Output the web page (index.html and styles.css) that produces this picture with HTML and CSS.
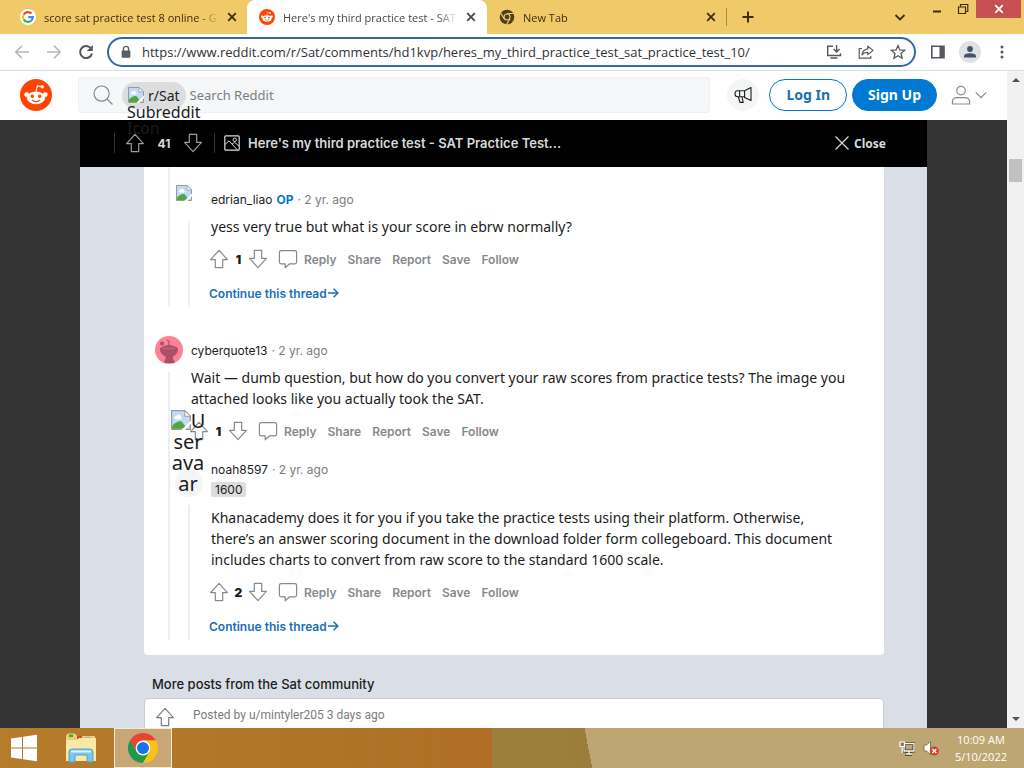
FILE: index.html
```html
<!DOCTYPE html>
<html lang="en">
<head>
<meta charset="utf-8">
<title>Here's my third practice test - SAT Practice Test 10</title>
<link rel="stylesheet" href="styles.css">
</head>
<body>
<svg class="defs" aria-hidden="true">
  <symbol id="up" viewBox="0 0 20 20"><path d="M10 1.3 18.4 10.6H13.7V18.6H6.3V10.6H1.6Z" fill="none" stroke="currentColor" stroke-width="1.2" stroke-linejoin="round"/></symbol>
  <symbol id="down" viewBox="0 0 20 20"><path d="M10 18.7 18.4 9.4H13.7V1.4H6.3V9.4H1.6Z" fill="none" stroke="currentColor" stroke-width="1.2" stroke-linejoin="round"/></symbol>
  <symbol id="bubble" viewBox="0 0 20 20"><path d="M3.2 1.6H16.8Q18.6 1.6 18.6 3.4V13Q18.6 14.8 16.8 14.8H11.6L7.2 18.8V14.8H3.2Q1.4 14.8 1.4 13V3.4Q1.4 1.6 3.2 1.6Z" fill="none" stroke="currentColor" stroke-width="1.2" stroke-linejoin="round"/></symbol>
  <symbol id="arrow" viewBox="0 0 12 12"><path d="M1 6H10.6M6.6 1.8 10.8 6 6.6 10.2" fill="none" stroke="currentColor" stroke-width="1.5"/></symbol>
  <symbol id="cross" viewBox="0 0 10 10"><path d="M1.2 1.2 8.8 8.8M8.8 1.2 1.2 8.8" fill="none" stroke="currentColor" stroke-width="1.8"/></symbol>
  <symbol id="broken" viewBox="0 0 16 16"><path d="M.5.5H11L15.5 5V15.5H.5Z" fill="#c3d9f5" stroke="#9a9a9a"/><path d="M11 .5V5H15.5Z" fill="#fff" stroke="#9a9a9a" stroke-width=".8"/><path d="M3 7.4A1.8 1.8 0 0 1 4.6 4.6 2 2 0 0 1 8.2 5.4 1.4 1.4 0 0 1 8 7.4Z" fill="#fff"/><path d="M1 15V12.6Q5 8 8.6 9.2L13 15Z" fill="#4ea83f"/><path d="M8.2 15.9 16 8.4V11L11.4 15.9Z" fill="#fff"/></symbol>
  <symbol id="snoo" viewBox="0 0 32 32"><circle cx="16" cy="16" r="16" fill="#ff4500"/><circle cx="6.7" cy="15.6" r="2.4" fill="#fff"/><circle cx="25.3" cy="15.6" r="2.4" fill="#fff"/><ellipse cx="16" cy="18.8" rx="9.2" ry="6.4" fill="#fff"/><path d="M16 12.5 17.4 6.8 21.6 7.7" fill="none" stroke="#fff" stroke-width="1.1"/><circle cx="22.2" cy="7.8" r="1.7" fill="#fff"/><circle cx="12.3" cy="17.2" r="1.7" fill="#ff4500"/><circle cx="19.7" cy="17.2" r="1.7" fill="#ff4500"/><path d="M12.3 21.2Q16 24 19.7 21.2" fill="none" stroke="#ff4500" stroke-width="1.1" stroke-linecap="round"/></symbol>
</svg>

<div class="desktop">
  <div class="tabs">
    <button class="tab tab-first">
      <svg class="i16" viewBox="0 0 16 16"><circle cx="8" cy="8" r="8" fill="#fff"/><g fill="none" stroke-width="2.1"><path d="M11.5 4.6A4.9 4.9 0 0 0 3.7 5.6" stroke="#ea4335"/><path d="M3.7 5.6A4.9 4.9 0 0 0 3.7 10.4" stroke="#fbbc05"/><path d="M3.7 10.4A4.9 4.9 0 0 0 11.2 11.7" stroke="#34a853"/><path d="M11.2 11.7A4.9 4.9 0 0 0 12.9 8.1H8.2" stroke="#4285f4"/></g></svg>
      <span class="tab-title">score sat practice test 8 online - G</span>
      <svg class="i10"><use href="#cross"/></svg>
    </button>
    <button class="tab tab-active">
      <svg class="i16"><use href="#snoo"/></svg>
      <span class="tab-title">Here's my third practice test - SAT</span>
      <svg class="i10"><use href="#cross"/></svg>
    </button>
    <button class="tab tab-last">
      <svg class="i16" viewBox="0 0 16 16"><circle cx="8" cy="8" r="7.3" fill="#4d3f22"/><circle cx="8" cy="8" r="3.6" fill="#f0c969"/><circle cx="8" cy="8" r="2.4" fill="#4d3f22"/><path d="M8 4.5H14.8M5 9.7 1.6 3.9M11 9.7 7.6 15.4" stroke="#f0c969" stroke-width="1.1"/></svg>
      <span class="tab-title">New Tab</span>
      <svg class="i10"><use href="#cross"/></svg>
    </button>
    <button class="new-tab" aria-label="New tab"><svg class="i12" viewBox="0 0 12 12"><path d="M6 .5V11.5M.5 6H11.5" stroke="#3f2d10" stroke-width="2"/></svg></button>
    <div class="controls">
      <button class="ctl ctl-search" aria-label="Search tabs"><svg class="i12" viewBox="0 0 12 12"><path d="M1.5 4 6 8.5 10.5 4" fill="none" stroke="#3f2d10" stroke-width="1.8"/></svg></button>
      <button class="ctl" aria-label="Minimize"><svg class="i12" viewBox="0 0 12 12"><path d="M2 8.5H10" stroke="#3f2d10" stroke-width="2"/></svg></button>
      <button class="ctl" aria-label="Restore"><svg class="i12" viewBox="0 0 12 12"><path d="M1.5 4H8.5V10.5H1.5ZM3.5 4V1.5H10.8V8.5H8.5" fill="none" stroke="#3f2d10" stroke-width="1.2"/></svg></button>
      <button class="ctl ctl-close" aria-label="Close window"><svg class="i10"><use href="#cross"/></svg></button>
    </div>
  </div>

  <div class="toolbar">
    <button class="nav off" aria-label="Back"><svg class="i16" viewBox="0 0 16 16"><path d="M15 8H2M8 1.8 1.8 8 8 14.2" fill="none" stroke="currentColor" stroke-width="1.6"/></svg></button>
    <button class="nav off" aria-label="Forward"><svg class="i16" viewBox="0 0 16 16"><path d="M1 8H14M8 1.8 14.2 8 8 14.2" fill="none" stroke="currentColor" stroke-width="1.6"/></svg></button>
    <button class="nav" aria-label="Reload"><svg class="i16" viewBox="0 0 16 16"><path d="M13.2 4.8A6 6 0 1 0 14 9.4" fill="none" stroke="currentColor" stroke-width="2"/><path d="M14.8 1V7H8.8Z" fill="currentColor"/></svg></button>
    <div class="omnibox">
      <svg class="i14" viewBox="0 0 14 14"><rect x="2.6" y="5.4" width="8.8" height="7.4" rx="1" fill="#5a5d61"/><path d="M4.4 6V4A2.6 2.6 0 0 1 9.6 4V6" fill="none" stroke="#5a5d61" stroke-width="1.4"/></svg>
      <input class="url" type="text" aria-label="Address" value="https://www.reddit.com/r/Sat/comments/hd1kvp/heres_my_third_practice_test_sat_practice_test_10/">
      <button class="nav" aria-label="Install"><svg class="i16" viewBox="0 0 16 16"><path d="M7 2.2H1.7V11.5H14.5V9.2M4.5 14H11.5M10.6 1V7.6M7.6 5 10.6 8 13.6 5" fill="none" stroke="currentColor" stroke-width="1.4"/></svg></button>
      <button class="nav" aria-label="Share"><svg class="i16" viewBox="0 0 16 16"><path d="M4 4.5H1.2V14.2H12.8V12M9.8 2.2 15 6.4 9.8 10.6V8.4Q6 8.2 4 10.8 4.8 5.4 9.8 4.8Z" fill="none" stroke="currentColor" stroke-width="1.2" stroke-linejoin="round"/></svg></button>
      <button class="nav" aria-label="Bookmark"><svg class="i16" viewBox="0 0 16 16"><path d="M8 1.6 9.9 6 14.6 6.4 11 9.5 12.1 14.2 8 11.7 3.9 14.2 5 9.5 1.4 6.4 6.1 6Z" fill="none" stroke="currentColor" stroke-width="1.3"/></svg></button>
    </div>
    <button class="nav" aria-label="Side panel"><svg class="i16" viewBox="0 0 16 16"><path d="M1.8 2.2H14V13.8H1.8Z" fill="none" stroke="currentColor" stroke-width="1.6"/><path d="M9.5 2H14V14H9.5Z" fill="currentColor"/></svg></button>
    <button class="nav profile" aria-label="Profile"><svg class="i22" viewBox="0 0 22 22"><circle cx="11" cy="11" r="11" fill="#dfe1e5"/><circle cx="11" cy="8" r="2.9" fill="#46526b"/><path d="M5 16.4V15Q5.4 12.2 11 12.2T17 15V16.4Z" fill="#46526b"/></svg></button>
    <button class="nav" aria-label="Menu"><svg class="i16" viewBox="0 0 16 16" fill="currentColor"><circle cx="8" cy="3" r="1.5"/><circle cx="8" cy="8" r="1.5"/><circle cx="8" cy="13" r="1.5"/></svg></button>
  </div>

  <div class="viewport">
    <div class="page">
      <header class="site">
        <a class="logo" href="#" aria-label="Reddit"><svg class="i32"><use href="#snoo"/></svg></a>
        <div class="search">
          <svg class="i22" viewBox="0 0 22 22"><circle cx="9.6" cy="9.6" r="7.6" fill="none" stroke="#878a8c" stroke-width="1.2"/><path d="M15 15 20.5 20.5" stroke="#878a8c" stroke-width="1.2"/></svg>
          <span class="chip"><svg class="i16"><use href="#broken"/></svg>r/Sat<span class="chip-alt">Subreddit<br><span class="chip-dim">Icon</span></span></span>
          <input class="query" type="search" placeholder="Search Reddit" aria-label="Search Reddit">
        </div>
        <button class="horn" aria-label="Advertise"><svg class="i20" viewBox="0 0 20 20"><path d="M18 2.6V15.6L11.6 12.4V5.800ZM11.6 5.8H4.6Q2 5.8 2 8.800T4.600 11.800H11.600M6.600 5.800V11.800M5.400 12 7 17.400H10.200L9 12" fill="none" stroke="#1c1c1c" stroke-width="1.1" stroke-linejoin="round"/></svg></button>
        <div class="auth">
          <button class="pill">Log In</button>
          <button class="pill pill-fill">Sign Up</button>
        </div>
        <button class="user" aria-label="User menu">
          <svg class="i20" viewBox="0 0 20 20"><circle cx="10" cy="5.6" r="4.3" fill="none" stroke="#878a8c" stroke-width="1.2"/><path d="M1.4 19V16.6Q1.8 12.6 6 12.6H14Q18.2 12.6 18.6 16.6V19Z" fill="none" stroke="#878a8c" stroke-width="1.2"/></svg>
          <svg class="i12" viewBox="0 0 12 12"><path d="M.8 3.4 6 8.6 11.2 3.4" fill="none" stroke="#878a8c" stroke-width="1.2"/></svg>
        </button>
      </header>

      <div class="backdrop">
        <main class="overlay">
          <div class="postbar">
            <div class="postvote">
              <svg class="i20"><use href="#up"/></svg><b>41</b><svg class="i20"><use href="#down"/></svg>
            </div>
            <svg class="i16" viewBox="0 0 16 16"><rect x=".8" y=".8" width="14.4" height="14.4" rx="1" fill="none" stroke="#d7dadc" stroke-width="1.2"/><circle cx="10.8" cy="4.8" r="1.7" fill="none" stroke="#d7dadc"/><path d="M1 9.5 5 5.8 13.4 15M8 9.2 10.6 7.4 15 11" fill="none" stroke="#d7dadc"/></svg>
            <h1>Here's my third practice test - SAT Practice Test...</h1>
            <button class="close"><svg class="i16" viewBox="0 0 16 16"><path d="M1.5 1.5 14.5 14.5M14.5 1.5 1.5 14.5" stroke="currentColor" stroke-width="1.2"/></svg>Close</button>
          </div>
          <div class="content">
            <section class="card">
              <article class="comment">
                <div class="rail"><span class="line"></span></div>
                <div class="body">
                  <article class="comment reply reply-top">
                    <div class="rail"><svg class="i16 avatar-missing"><use href="#broken"/></svg><span class="line"></span></div>
                    <div class="body">
                      <div class="meta"><a class="name" href="#">edrian_liao</a><b class="op">OP</b><span>· 2 yr. ago</span></div>
                      <p>yess very true but what is your score in ebrw normally?</p>
                      <div class="actions"><button class="vote" aria-label="Upvote"><svg class="i20"><use href="#up"/></svg></button><b>1</b><button class="vote" aria-label="Downvote"><svg class="i20"><use href="#down"/></svg></button><button class="act with-icon"><svg class="i20"><use href="#bubble"/></svg>Reply</button><button class="act">Share</button><button class="act">Report</button><button class="act">Save</button><button class="act">Follow</button></div>
                      <a class="more" href="#">Continue this thread<svg class="i12"><use href="#arrow"/></svg></a>
                    </div>
                  </article>
                </div>
              </article>

              <article class="comment second">
                <div class="rail"><svg class="avatar" viewBox="0 0 28 28"><circle cx="14" cy="14" r="14" fill="#fb8299"/><circle cx="7" cy="7.5" r="2" fill="#a94f68"/><path d="M12 4Q14.5 5 14 9" fill="none" stroke="#a94f68" stroke-width="1.2"/><path d="M5 12Q14 6 23 12 23.5 18 18 20.5V23Q20 25 19.5 27H9.5Q9 24 10.5 23V20.5Q4.5 18 5 12Z" fill="#a94f68"/><path d="M8 12.5H20" stroke="#bd5f79" stroke-width="2"/></svg><span class="line"></span></div>
                <div class="body">
                  <div class="meta"><a class="name" href="#">cyberquote13</a><span>· 2 yr. ago</span></div>
                  <p>Wait — dumb question, but how do you convert your raw scores from practice tests? The image you attached looks like you actually took the SAT.</p>
                  <div class="actions"><button class="vote" aria-label="Upvote"><svg class="i20"><use href="#up"/></svg></button><b>1</b><button class="vote" aria-label="Downvote"><svg class="i20"><use href="#down"/></svg></button><button class="act with-icon"><svg class="i20"><use href="#bubble"/></svg>Reply</button><button class="act">Share</button><button class="act">Report</button><button class="act">Save</button><button class="act">Follow</button></div>
                  <article class="comment reply">
                    <div class="rail"><span class="avatar avatar-blank"><span class="avatar-alt"><svg class="i20"><use href="#broken"/></svg>U<br>ser<br>ava<br>ar</span></span><span class="line"></span></div>
                    <div class="body">
                      <div class="meta meta-flair"><a class="name" href="#">noah8597</a><span>· 2 yr. ago</span></div>
                      <span class="flair">1600</span>
                      <p>Khanacademy does it for you if you take the practice tests using their platform. Otherwise, there’s an answer scoring document in the download folder form collegeboard. This document includes charts to convert from raw score to the standard 1600 scale.</p>
                      <div class="actions"><button class="vote" aria-label="Upvote"><svg class="i20"><use href="#up"/></svg></button><b>2</b><button class="vote" aria-label="Downvote"><svg class="i20"><use href="#down"/></svg></button><button class="act with-icon"><svg class="i20"><use href="#bubble"/></svg>Reply</button><button class="act">Share</button><button class="act">Report</button><button class="act">Save</button><button class="act">Follow</button></div>
                      <a class="more" href="#">Continue this thread<svg class="i12"><use href="#arrow"/></svg></a>
                    </div>
                  </article>
                </div>
              </article>
            </section>
            <h2>More posts from the Sat community</h2>
            <section class="post"><svg class="i20"><use href="#up"/></svg><span>Posted by u/mintyler205 3 days ago</span></section>
          </div>
        </main>
      </div>
    </div>
    <div class="scrollbar">
      <svg class="i8" viewBox="0 0 8 8"><path d="M0 6 4 2 8 6Z" fill="#505050"/></svg>
      <span class="thumb"></span>
      <svg class="i8" viewBox="0 0 8 8"><path d="M0 2 4 6 8 2Z" fill="#505050"/></svg>
    </div>
  </div>

  <footer class="taskbar">
    <button class="task" aria-label="Start"><svg class="i28" viewBox="0 0 28 28" fill="#fff"><path d="M1 4.5 12 3V13.4H1ZM13 2.8 27 .8V13.4H13ZM1 14.6H12V25L1 23.5ZM13 14.6H27V27.2L13 25.2Z"/></svg></button>
    <button class="task" aria-label="File Explorer"><svg class="i32" viewBox="0 0 32 32"><path d="M1 3.5 3 1.5H10L12 4H30V29H1Z" fill="#e9cf74"/><path d="M4 2.5H8V5H4Z" fill="#36a852"/><path d="M12 4H17V7H12Z" fill="#d8482e"/><path d="M20 5.5H25V8H20Z" fill="#5b9bd0"/><path d="M1 8H12L14 6H31V29H1Z" fill="#f8eaa4"/><path d="M4 30V20Q4 17 7 17H25Q28 17 28 20V30H22V23H10V30Z" fill="#7cc5ec" stroke="#4da3d6"/><path d="M6 19.5H26" stroke="#d8f2ff" stroke-width="2"/></svg></button>
    <button class="task task-active" aria-label="Chrome"><svg class="i32" viewBox="0 0 32 32"><path d="M16 8.5H29A15 15 0 0 0 3 8.5L9.5 19.8Z" fill="#ea4335"/><path d="M9.5 19.8 3 8.5A15 15 0 0 0 16 31L22.5 19.8Z" fill="#1e9a4a"/><path d="M16 31A15 15 0 0 0 29 8.5H16L22.5 19.8Z" fill="#fbc116"/><circle cx="16" cy="16" r="7.4" fill="#fff"/><circle cx="16" cy="16" r="6" fill="#1a73e8"/></svg></button>
    <div class="tray">
      <svg class="i16" viewBox="0 0 16 16"><path d="M5 3.5H15V11H5ZM10 11V14M6 14.2H13" fill="none" stroke="#3f3520" stroke-width="3"/><path d="M5 3.5H15V11H5ZM10 11V14M6.5 14H13" fill="none" stroke="#fff" stroke-width="1.3"/><path d="M1 2H5.5V6.5H1ZM3.2 6.5V13" fill="#8c7a4c" stroke="#fff" stroke-width="1.2"/></svg>
      <svg class="i16" viewBox="0 0 16 16"><path d="M1 5H3.5L7.5 1.5V14.5L3.5 11H1Z" fill="#fff" stroke="#6f603a" stroke-width=".8"/><circle cx="11.3" cy="11" r="4.5" fill="#d33c2e"/><path d="M9.3 9 13.3 13M13.3 9 9.3 13" stroke="#fff" stroke-width="1.5"/></svg>
      <div class="clock"><time>10:09 AM</time><time>5/10/2022</time></div>
    </div>
  </footer>
</div>
</body>
</html>
```
FILE: styles.css
```css
* { box-sizing: border-box; }
body { margin: 0; font-family: "Noto Sans", sans-serif; color: #1c1c1c; }
button { border: 0; padding: 0; background: none; font: inherit; color: inherit; cursor: pointer; }
input { border: 0; padding: 0; background: none; outline: 0; min-width: 0; }
a { color: inherit; text-decoration: none; }
h1, h2, p { margin: 0; }
svg { display: block; flex: none; }
.defs { display: none; }
.i8 { width: 8px; height: 8px; }
.i10 { width: 10px; height: 10px; }
.i12 { width: 12px; height: 12px; }
.i14 { width: 14px; height: 14px; }
.i16 { width: 16px; height: 16px; }
.i20 { width: 20px; height: 20px; }
.i22 { width: 22px; height: 22px; }
.i28 { width: 28px; height: 28px; }
.i32 { width: 32px; height: 32px; }

.desktop { display: flex; flex-direction: column; height: 100vh; overflow: hidden; }

/* Browser chrome */
.tabs { display: flex; flex: none; height: 34px; background: #f0c969; color: #3f2d10; font-family: "Open Sans", sans-serif; font-size: 11px; }
.tab { display: flex; align-items: center; gap: 8px; flex: 0 1 240px; min-width: 0; padding: 0 12px; text-align: left; }
.tab-first { flex-basis: 247px; padding-left: 20px; padding-right: 10px; }
.tab-title { flex: 1; min-width: 0; overflow: hidden; white-space: nowrap; mask-image: linear-gradient(90deg, #000 88%, transparent); }
.tab-active { background: #fff; border-radius: 8px 8px 0 0; color: #45484c; padding-right: 11px; }
.tab-last { border-right: 1px solid #a88a45; height: 18px; align-self: center; padding-right: 10px; }
.new-tab { display: flex; align-items: center; padding: 0 15px; }
.controls { display: flex; align-items: flex-start; margin-left: auto; padding-right: 3px; }
.ctl { display: flex; align-items: center; justify-content: center; width: 26px; height: 18px; }
.ctl-search { width: 24px; height: 34px; margin-right: 12px; }
.ctl-close { width: 45px; background: #c75050; color: #fff; }
.toolbar { display: flex; align-items: center; flex: none; gap: 16px; height: 37px; padding: 0 14px; background: #fff; border-bottom: 1px solid #dadce0; color: #54575b; }
.profile, .profile + .nav { margin-left: -3px; }
.off { color: #b4b6b9; }
.omnibox { display: flex; align-items: center; flex: 1; min-width: 0; gap: 16px; height: 30px; margin: 0 -2px 0 -3px; padding: 0 8px 0 10px; border: 2px solid #3767a6; border-radius: 15px; }
.url { flex: 1; margin-left: -7px; font: 13px "Open Sans", sans-serif; color: #303236; }

.viewport { display: flex; flex: 1; min-height: 0; }
.page { display: flex; flex-direction: column; flex: 1; min-width: 0; }
.scrollbar { display: flex; flex-direction: column; align-items: center; flex: none; width: 17px; padding: 5px 0; background: #f1f1f1; }
.thumb { width: 13px; height: 23px; margin-top: 75px; margin-bottom: auto; background: #c1c1c1; }

/* Site header */
.site { display: flex; align-items: center; flex: none; height: 49px; padding: 0 20px 1px; background: #fff; }
.search { display: flex; align-items: center; flex: 1; min-width: 0; height: 36px; margin: 0 17px 0 26px; padding-left: 13px; background: #f6f7f8; border: 1px solid #edeff1; border-radius: 4px; }
.chip { position: relative; display: flex; align-items: center; gap: 4px; height: 27px; margin: 0 4px 0 8px; padding: 0 6px; background: #dcdddf; border-radius: 14px; font-size: 14px; }
.chip-alt { position: absolute; z-index: 2; left: 5px; top: 22px; font-size: 16px; line-height: 16px; }
.chip-dim { color: #1c1c1c; }
.query { flex: 1; font: 13px "Noto Sans", sans-serif; }
.query::placeholder { color: #7c7f81; }
.horn { display: flex; align-items: center; justify-content: center; width: 32px; height: 32px; border-radius: 50%; background: #f4f5f5; }
.auth { display: flex; gap: 5px; margin: 0 14px 0 10px; }
.pill { height: 32px; padding: 0 16px 2px; border: 1px solid #0079d3; border-radius: 16px; font-size: 14px; font-weight: 700; color: #1a6fb4; }
.pill-fill { padding: 0 15px 2px; background: #0079d3; color: #fff; }
.user { display: flex; align-items: center; gap: 4px; }

/* Post overlay */
.backdrop { display: flex; flex: 1; min-height: 0; padding: 0 80px; background: #333; }
.overlay { display: flex; flex-direction: column; flex: 1; min-width: 0; background: #dadee6; }
.postbar { display: flex; align-items: center; flex: none; gap: 8px; height: 47px; padding: 0 41px 1px 34px; background: #000; color: #d7dadc; font-size: 12px; }
.postvote { display: flex; align-items: center; gap: 10px; margin-right: 1px; padding: 0 11px 0 10px; border: solid #343536; border-width: 0 1px; color: #9a9c9e; }
.postvote b { width: 18px; text-align: center; font-family: Inter, sans-serif; color: #d7dadc; }
h1 { flex: 1; font: 600 13px Inter, sans-serif; }
.close { display: flex; align-items: center; gap: 4px; font-weight: 700; }
.content { flex: 1; min-height: 0; overflow: hidden; padding: 0 43px 0 64px; }
.card { padding: 0 34px 15px 11px; background: #fff; border-radius: 0 0 4px 4px; }

.comment { display: grid; grid-template-columns: 28px 1fr; column-gap: 8px; }
.body { min-width: 0; }
.rail { display: flex; flex-direction: column; align-items: center; gap: 8px; }
.line { flex: 1; width: 2px; background: #edeff1; }
.reply { margin-left: -16px; }
.reply-top { padding-top: 17px; }
.avatar-missing { align-self: flex-start; margin: 1px 0 12px 1px; }
.avatar { width: 28px; height: 28px; margin-top: 1px; }
.second { padding-top: 28px; }
.meta { display: flex; align-items: center; gap: 4px; height: 32px; padding-bottom: 2px; font: 12px Inter, sans-serif; color: #7c7c7c; }
.name { color: #1c1c1c; }
.op { color: #0079d3; }
.meta-flair { height: 27px; padding-top: 4px; }
.flair { display: table; margin-bottom: 10px; padding: 0 4px; border-radius: 2px; background: #dcdddd; font: 12px/15px Inter, sans-serif; }
p { font-size: 14px; line-height: 21px; }
.actions { display: flex; align-items: center; gap: 11px; height: 32px; margin: 6px 0 8px -2px; font: 600 12px Inter, sans-serif; color: #878a8c; }
.actions b { width: 19px; margin: 0 -11px; text-align: center; color: #1c1c1c; }
.vote + .act { margin-left: -1px; }
.with-icon { display: flex; align-items: center; gap: 6px; }
.more { display: flex; align-items: center; height: 20px; margin: 0 0 4px -2px; font: 600 12px Inter, sans-serif; color: #1a70b8; }
.avatar-blank { position: relative; margin-top: 14px; border-radius: 50%; background: #f4f5f5; }
.avatar-alt { position: absolute; left: -5px; bottom: 3px; width: 36px; font-size: 20px; line-height: 21px; text-align: center; }
.avatar-alt svg { display: inline-block; vertical-align: top; }

h2 { padding: 20px 8px 0; font: 500 13px/18px Inter, sans-serif; }
.post { display: flex; gap: 18px; height: 80px; margin-top: 5px; padding: 8px 10px; background: #fff; border: 1px solid #c9cdd1; border-radius: 4px; font: 12px/16px Roboto, sans-serif; color: #7c7c7c; }

/* Taskbar */
.taskbar { display: flex; flex: none; height: 40px; background: linear-gradient(79deg, transparent 57.4%, #bda671 57.4%), linear-gradient(90deg, #b57c2c, #ad7428 35%, #b26d25 48%, #9b7f3b 48%, #a07a3c); }
.task { display: flex; align-items: center; justify-content: center; width: 66px; }
.task:first-child { width: 48px; }
.task-active { width: 58px; border: 1px solid #f5e9d0; background: #c9a676; }
.tray { display: flex; align-items: center; gap: 8px; margin-left: auto; padding-right: 17px; }
.clock { display: flex; flex-direction: column; align-items: center; margin-left: 8px; font: 11px/17px "Open Sans", sans-serif; color: #fff; }
```
